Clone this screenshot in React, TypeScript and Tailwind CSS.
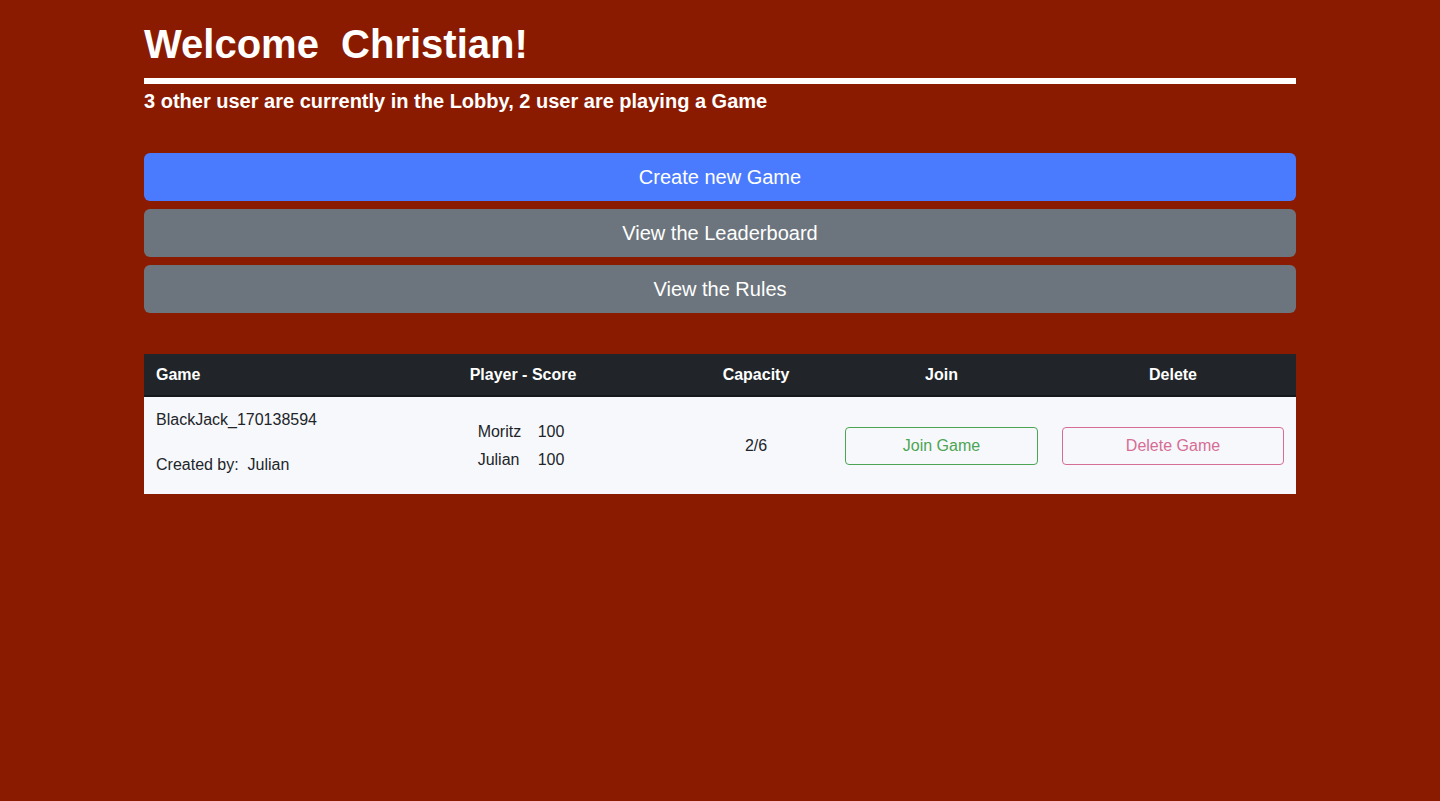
export default function App() {
  const players = [
    { name: "Moritz", score: 100 },
    { name: "Julian", score: 100 },
  ];

  return (
    <div
      className="min-h-[801px] w-full bg-[#8b1b00] text-white"
      style={{ fontFamily: '"Liberation Sans", Arial, sans-serif' }}
    >
      <div className="mx-auto w-[1152px] pt-[20px]">
        {/* Heading */}
        <h1 className="whitespace-pre text-[40px] font-bold leading-[48px]">Welcome  Christian!</h1>
        <div className="mt-[10px] h-[6px] bg-white" />
        <p className="mt-[5px] text-[20px] font-bold leading-[24px]">
          3 other user are currently in the Lobby, 2 user are playing a Game
        </p>

        {/* Actions */}
        <div className="mt-[40px] flex flex-col gap-2">
          <button className="h-12 rounded-md bg-[#4a7bff] text-[20px] text-white">Create new Game</button>
          <button className="h-12 rounded-md bg-[#6c757d] text-[20px] text-white">View the Leaderboard</button>
          <button className="h-12 rounded-md bg-[#6c757d] text-[20px] text-white">View the Rules</button>
        </div>

        {/* Games table */}
        <table className="mt-[41px] w-full table-fixed border-collapse text-[16px]">
          <colgroup>
            <col className="w-[223px]" />
            <col className="w-[312px]" />
            <col className="w-[154px]" />
            <col className="w-[217px]" />
            <col className="w-[246px]" />
          </colgroup>
          <thead>
            <tr className="h-[42px] border-b-2 border-[#16191c] bg-[#212529] font-bold">
              <th className="px-3 text-left">Game</th>
              <th className="px-3 text-center">Player - Score</th>
              <th className="px-3 text-center">Capacity</th>
              <th className="px-3 text-center">Join</th>
              <th className="px-3 text-center">Delete</th>
            </tr>
          </thead>
          <tbody>
            <tr className="bg-[#f7f8fc] text-[#212529]">
              <td className="px-3 pt-[11px] pb-[17px] align-top">
                <div className="leading-[24px]">BlackJack_170138594</div>
                <div className="mt-[21px] whitespace-pre leading-[24px]">Created by:  Julian</div>
              </td>
              <td className="px-3 align-middle">
                <div className="flex justify-center">
                  <div className="flex flex-col gap-[4px] pr-[4px]">
                    {players.map((p) => (
                      <div key={p.name} className="flex leading-[24px]">
                        <span className="w-[60px]">{p.name}</span>
                        <span>{p.score}</span>
                      </div>
                    ))}
                  </div>
                </div>
              </td>
              <td className="px-3 text-center align-middle">2/6</td>
              <td className="px-3 align-middle">
                <button className="h-[38px] w-full rounded-[4px] border border-[#4ca552] text-[#4ca552]">Join Game</button>
              </td>
              <td className="px-3 align-middle">
                <button className="h-[38px] w-full rounded-[4px] border border-[#d66d93] text-[#d66d93]">Delete Game</button>
              </td>
            </tr>
          </tbody>
        </table>
      </div>
    </div>
  );
}
